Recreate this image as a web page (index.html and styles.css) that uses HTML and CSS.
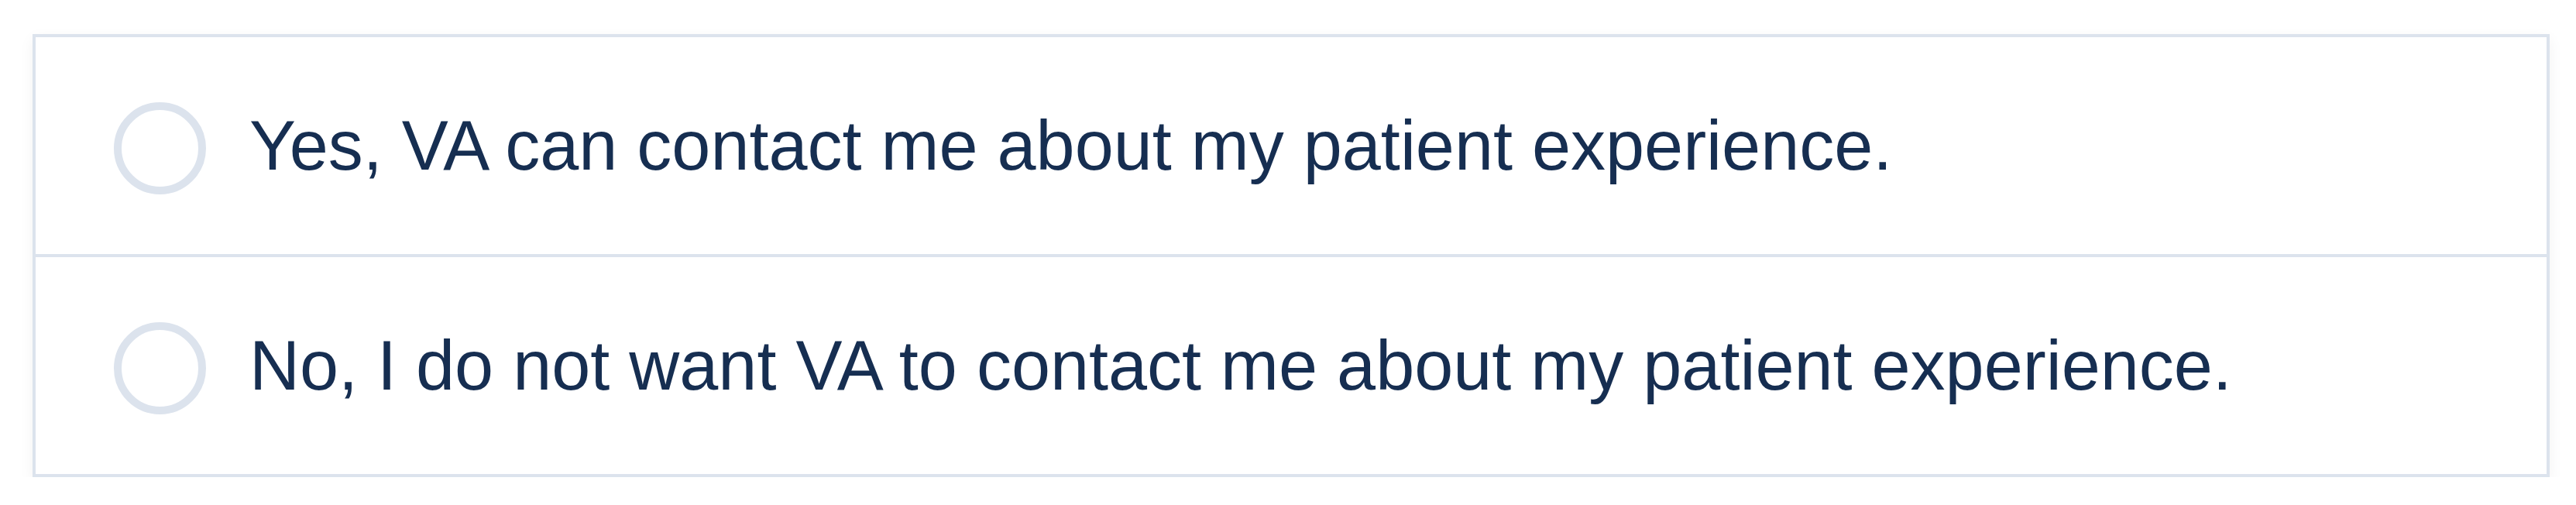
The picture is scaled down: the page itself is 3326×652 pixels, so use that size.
FILE: index.html
```html
<!DOCTYPE html>
<html>
<head>
<meta charset="utf-8">
<link rel="stylesheet" href="styles.css">
</head>
<body>
<div class="options">
  <label class="option">
    <span class="radio"></span>
    <span class="label-text">Yes, VA can contact me about my patient experience.</span>
  </label>
  <label class="option">
    <span class="radio"></span>
    <span class="label-text">No, I do not want VA to contact me about my patient experience.</span>
  </label>
</div>
</body>
</html>
```
FILE: styles.css
```css
html, body {
  margin: 0;
  background: #ffffff;
}
body {
  padding: 44px 0 0 42px;
  font-family: "Liberation Sans", Arial, sans-serif;
}
.options {
  width: 3242px;
  border: 4px solid #dce3ed;
  background: #ffffff;
  box-shadow: 0 6px 18px rgba(0, 0, 0, 0.05);
  display: flex;
  flex-direction: column;
}
.option {
  height: 280px;
  display: flex;
  align-items: center;
  box-sizing: border-box;
}
.option + .option {
  border-top: 4px solid #dce3ed;
  height: 284px;
}
.radio {
  flex: none;
  width: 119px;
  height: 119px;
  box-sizing: border-box;
  border: 10px solid #dce3ed;
  border-radius: 50%;
  margin-left: 101px;
  margin-top: 7px;
}
.label-text {
  margin-left: 56px;
  font-size: 90px;
  color: #162e51;
  line-height: 1.2;
}
```
